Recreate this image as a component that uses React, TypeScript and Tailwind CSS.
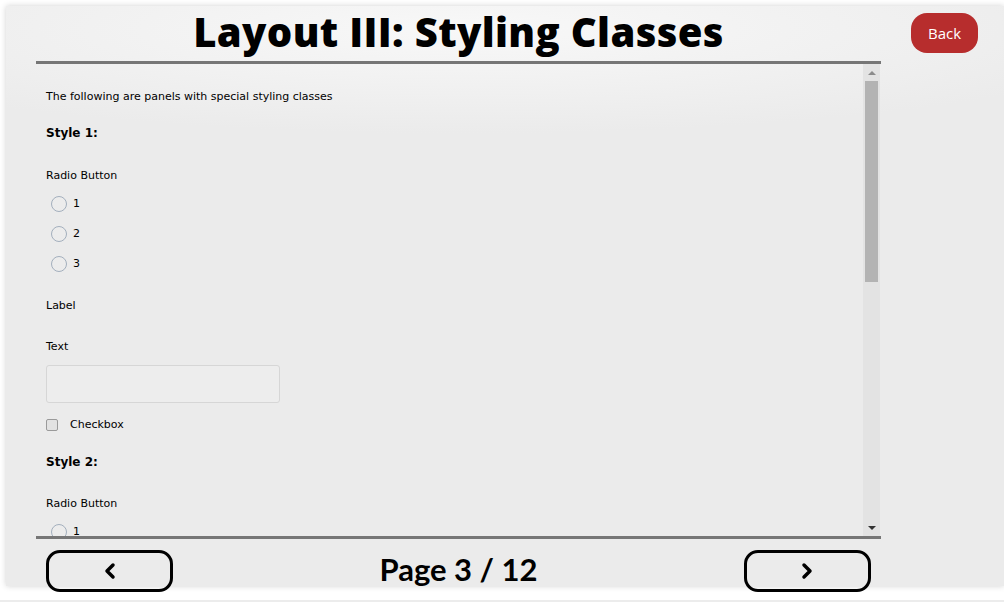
import { ChevronLeft, ChevronRight } from "lucide-react";

const small = "font-['DejaVu_Sans',sans-serif] text-[11px] text-black";

function Radio({ label }: { label: string }) {
  return (
    <div className="flex items-center h-[30px]">
      <span className="ml-[5px] w-[16px] h-[16px] rounded-full border border-[#a3afbd] bg-[#ececec]" />
      <span className={`ml-[6px] ${small}`}>{label}</span>
    </div>
  );
}

function Row({ children, className = "" }: { children: React.ReactNode; className?: string }) {
  return <div className={`h-[20px] flex items-center ${className}`}>{children}</div>;
}

export default function App() {
  return (
    <div className="w-[1004px] h-[602px] bg-white overflow-hidden">
      {/* Panel */}
      <div className="ml-[6px] mt-[6px] w-[998px] h-[580px] flex bg-[radial-gradient(ellipse_70%_18%_at_46%_4%,#f8f8f8,#ebebeb)] shadow-[0_0_6px_rgba(0,0,0,0.18)]">
        {/* Main column */}
        <div className="ml-[30px] w-[845px] flex flex-col">
          <div className="shrink-0 h-[55px] flex items-end justify-center pb-[9px]">
            <h1 className="font-['Open_Sans',sans-serif] font-extrabold text-[40px] leading-none tracking-[0.35px] text-black">
              Layout III: Styling Classes
            </h1>
          </div>
          <div className="shrink-0 h-[3px] bg-[#767676]" />

          {/* Scroll area */}
          <div className="shrink-0 h-[472px] flex">
            <div className="flex-1 overflow-hidden pl-[10px]">
              <Row className="mt-[23px]">
                <span className={small}>The following are panels with special styling classes</span>
              </Row>
              <Row className="mt-[16px]">
                <span className="font-['DejaVu_Sans',sans-serif] font-bold text-[12px]">Style 1:</span>
              </Row>
              <Row className="mt-[23px]">
                <span className={small}>Radio Button</span>
              </Row>
              <div className="mt-[3px]">
                <Radio label="1" />
                <Radio label="2" />
                <Radio label="3" />
              </div>
              <Row className="mt-[17px]">
                <span className={small}>Label</span>
              </Row>
              <Row className="mt-[21px]">
                <span className={small}>Text</span>
              </Row>
              <div className="mt-[8px] w-[234px] h-[38px] rounded-[3px] border border-[#d6d6d6] bg-[#ededed]" />
              <Row className="mt-[12px]">
                <span className="w-[12px] h-[12px] rounded-[2px] border border-[#9a9a9a] bg-[#e2e2e2]" />
                <span className={`ml-[12px] ${small}`}>Checkbox</span>
              </Row>
              <Row className="mt-[17px]">
                <span className="font-['DejaVu_Sans',sans-serif] font-bold text-[12px]">Style 2:</span>
              </Row>
              <Row className="mt-[22px]">
                <span className={small}>Radio Button</span>
              </Row>
              <div className="mt-[3px]">
                <Radio label="1" />
              </div>
            </div>
            {/* Scrollbar */}
            <div className="w-[17px] mr-[1px] bg-[#e3e3e3] flex flex-col items-center">
              <div className="h-[17px] flex items-center justify-center">
                <span className="w-0 h-0 border-l-[4px] border-r-[4px] border-b-[4px] border-l-transparent border-r-transparent border-b-[#8c8c8c]" />
              </div>
              <div className="w-[13px] h-[201px] bg-[#b3b3b3]" />
              <div className="flex-1" />
              <div className="h-[17px] flex items-center justify-center">
                <span className="w-0 h-0 border-l-[4px] border-r-[4px] border-t-[4px] border-l-transparent border-r-transparent border-t-[#333]" />
              </div>
            </div>
          </div>
          <div className="shrink-0 h-[3px] bg-[#767676]" />

          {/* Footer */}
          <div className="shrink-0 mt-[11px] flex items-center justify-between px-[10px]">
            <button className="w-[127px] h-[42px] rounded-[14px] border-[3px] border-black flex items-center justify-center bg-transparent">
              <ChevronLeft size={24} strokeWidth={3.5} className="text-black" />
            </button>
            <span className="font-['Lato',sans-serif] font-bold text-[31px] leading-none text-black -mt-[3px]">Page 3 / 12</span>
            <button className="w-[127px] h-[42px] rounded-[14px] border-[3px] border-black flex items-center justify-center bg-transparent">
              <ChevronRight size={24} strokeWidth={3.5} className="text-black" />
            </button>
          </div>
        </div>

        {/* Right column */}
        <div className="flex-1 pt-[7px] pl-[30px]">
          <button className="w-[67px] h-[40px] rounded-[16px] bg-[#b72d2d] text-white font-['Open_Sans',sans-serif] text-[15px]">
            Back
          </button>
        </div>
      </div>
      <div className="mt-[14px] h-[2px] bg-[#ececec]" />
    </div>
  );
}
